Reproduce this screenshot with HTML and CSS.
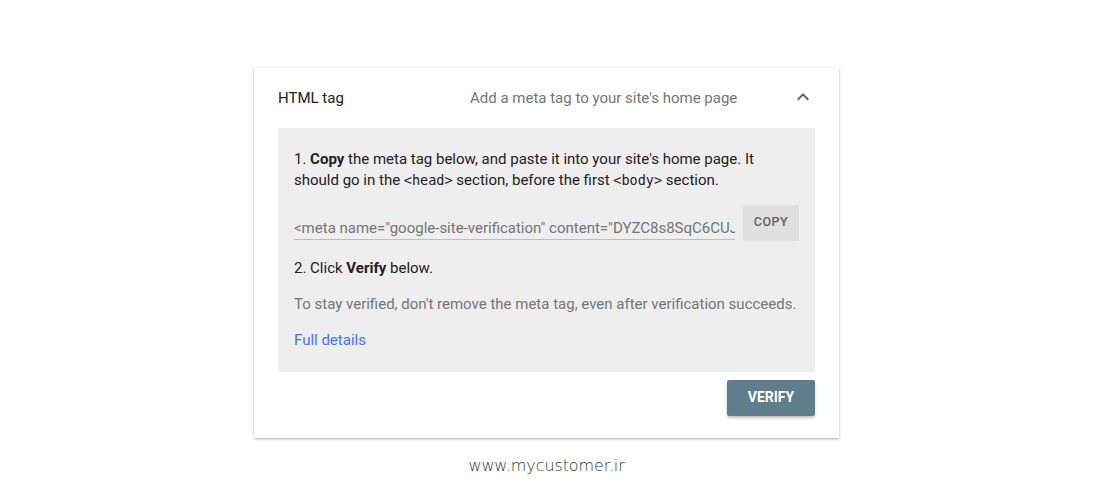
FILE: index.html
```html
<!DOCTYPE html>
<html>
<head>
<meta charset="utf-8">
<link rel="stylesheet" href="styles.css">
</head>
<body>
<div class="wrap">
  <div class="card">
    <div class="header">
      <div class="title">HTML tag</div>
      <div class="subtitle">Add a meta tag to your site's home page</div>
      <div class="chev">
        <svg width="24" height="24" viewBox="0 0 24 24"><path d="M7.41 15.41L12 10.83l4.59 4.58L18 14l-6-6-6 6z" fill="#616161"/></svg>
      </div>
    </div>
    <div class="panel">
      <p class="step">1. <b>Copy</b> the meta tag below, and paste it into your site's home page. It should go in the <code>&lt;head&gt;</code> section, before the first <code>&lt;body&gt;</code> section.</p>
      <div class="copyrow">
        <div class="field">&lt;meta name="google-site-verification" content="DYZC8s8SqC6CUJ</div>
        <div class="copybtn">COPY</div>
      </div>
      <p class="step2">2. Click <b>Verify</b> below.</p>
      <p class="note">To stay verified, don't remove the meta tag, even after verification succeeds.</p>
      <a class="details">Full details</a>
    </div>
    <div class="actions">
      <div class="verify">VERIFY</div>
    </div>
  </div>
  <div class="mark">www.mycustomer.ir</div>
</div>
</body>
</html>
```
FILE: styles.css
```css
html, body { margin: 0; padding: 0; background: #fff; }
body { font-family: Roboto, "Liberation Sans", sans-serif; color: #212121; }
.wrap { width: 585px; margin: 68px 0 0 254px; }
.card {
  background: #fff;
  box-shadow: 0 1px 3px rgba(0,0,0,0.25), 0 1px 1px rgba(0,0,0,0.08);
  padding: 0 24px 22px 24px;
}
.header {
  height: 60px;
  display: grid;
  grid-template-columns: 192px 1fr 24px;
  align-items: center;
}
.title { font-size: 15px; color: #212121; }
.subtitle { font-size: 15px; color: #757575; }
.chev { width: 24px; height: 24px; display: flex; margin-top: -2px; }
.panel {
  background: #eeeeee;
  padding: 21px 16px 21px 16px;
  font-size: 15px;
  line-height: 21px;
}
.panel p { margin: 0; }
.step { color: #212121; }
.panel b { font-weight: 700; }
code { font-family: "DejaVu Sans Mono", monospace; font-size: 13.5px; }
.copyrow { display: flex; align-items: flex-end; gap: 8px; margin-top: 14px; }
.field {
  width: 441px;
  overflow: hidden;
  white-space: nowrap;
  color: #757575;
  font-size: 15px;
  line-height: 20px;
  border-bottom: 1px solid #bdbdbd;
  padding-bottom: 1px;
  margin-bottom: 1px;
}
.copybtn {
  width: 56px; height: 36px;
  background: #e0e0e0;
  border-radius: 2px;
  display: flex; align-items: center; justify-content: center;
  font-size: 12.5px; font-weight: 500; color: #616161; letter-spacing: 0.5px;
  padding-bottom: 4px; box-sizing: border-box;
}
.step2 { margin-top: 17px !important; color: #212121; }
.note { margin-top: 15px !important; color: #757575; }
.details { display: block; margin-top: 15px; color: #4275f4; text-decoration: none; }
.actions { display: flex; justify-content: flex-end; margin-top: 8px; }
.verify {
  width: 88px; height: 36px;
  background: #607d8b;
  color: #fff;
  font-size: 14px; font-weight: 700;
  display: flex; align-items: center; justify-content: center;
  border-radius: 2px;
  box-shadow: 0 2px 3px rgba(0,0,0,0.25);
  padding-bottom: 2px; box-sizing: border-box;
}
.mark {
  text-align: center;
  margin-top: 18px;
  font-family: "DejaVu Sans", sans-serif;
  font-weight: 300;
  font-size: 16px;
  color: #333;
  letter-spacing: -0.1px;
}
```
